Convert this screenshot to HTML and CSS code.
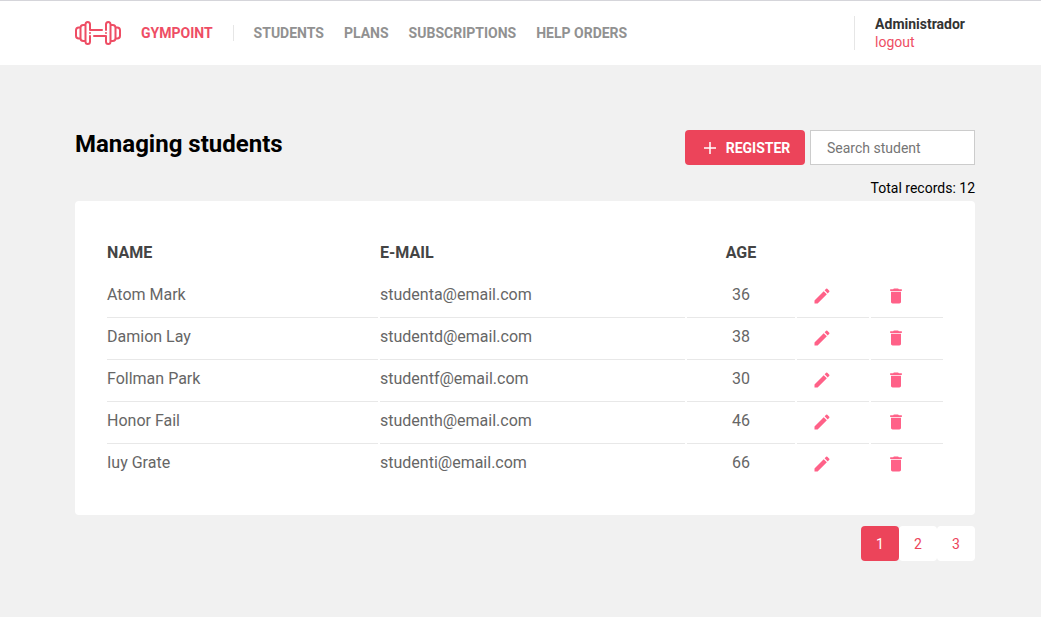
FILE: index.html
```
<!DOCTYPE html>
<html lang="en">
<head>
<meta charset="utf-8">
<title>Gympoint</title>
<link rel="stylesheet" href="styles.css">
</head>
<body>
<svg class="sprite" aria-hidden="true">
  <symbol id="pencil" viewBox="0 0 24 24"><path d="M3 17.25V21h3.75L17.81 9.94l-3.75-3.75L3 17.25zM20.71 7.04a1 1 0 0 0 0-1.41l-2.34-2.34a1 1 0 0 0-1.41 0l-1.83 1.83 3.75 3.75 1.83-1.83z"/></symbol>
  <symbol id="trash" viewBox="0 0 24 24"><path d="M6 19c0 1.100.9 2 2 2h8c1.100 0 2-.9 2-2V7H6v12zM19 4h-3.500l-1-1h-5l-1 1H5v2h14V4z"/></symbol>
</svg>
<header class="topbar">
  <a class="brand" href="#">
    <svg class="logo" viewBox="0 0 46 24" aria-hidden="true">
      <path d="M5 6.500H3.800Q1 6.500 1 9.300v5.400q0 2.800 2.800 2.800H5M10.500 4H8.300Q5.500 4 5.500 6.800v10.400q0 2.800 2.800 2.800h2.200M15 15v5.500a2.250 2.500 0 0 1-4.500 0V3.500a2.250 2.500 0 0 1 4.500 0V9H27M15 12v.1M41 6.500h1.200Q45 6.500 45 9.300v5.400q0 2.800-2.800 2.800H41M35.500 4h2.200q2.800 0 2.800 2.800v10.400q0 2.800-2.800 2.800h-2.200M31 9V3.500a2.250 2.500 0 0 1 4.500 0v17a2.250 2.500 0 0 1-4.500 0V15H19M31 12v.1"/>
    </svg>
    <span>GYMPOINT</span>
  </a>
  <nav class="menu">
    <a href="#">STUDENTS</a>
    <a href="#">PLANS</a>
    <a href="#">SUBSCRIPTIONS</a>
    <a href="#">HELP ORDERS</a>
  </nav>
  <div class="profile">
    <strong>Administrador</strong>
    <a href="#">logout</a>
  </div>
</header>
<main class="content">
  <div class="heading">
    <h1>Managing students</h1>
    <div class="actions">
      <button class="register" type="button">
        <svg viewBox="0 0 14 14" aria-hidden="true"><path d="M7 1v12M1 7h12"/></svg>
        <span>REGISTER</span>
      </button>
      <input class="search" type="text" placeholder="Search student" aria-label="Search student">
    </div>
  </div>
  <p class="total">Total records: 12</p>
  <section class="card">
    <table class="students">
      <colgroup><col class="col-name"><col class="col-mail"><col class="col-age"><col class="col-action"><col class="col-action"></colgroup>
      <thead>
        <tr><th>NAME</th><th>E-MAIL</th><th class="age">AGE</th><th></th><th></th></tr>
      </thead>
      <tbody>
        <tr><td>Atom Mark</td><td>studenta@email.com</td><td class="age">36</td><td class="action"><button type="button" aria-label="Edit"><svg><use href="#pencil"/></svg></button></td><td class="action"><button type="button" aria-label="Delete"><svg><use href="#trash"/></svg></button></td></tr>
        <tr><td>Damion Lay</td><td>studentd@email.com</td><td class="age">38</td><td class="action"><button type="button" aria-label="Edit"><svg><use href="#pencil"/></svg></button></td><td class="action"><button type="button" aria-label="Delete"><svg><use href="#trash"/></svg></button></td></tr>
        <tr><td>Follman Park</td><td>studentf@email.com</td><td class="age">30</td><td class="action"><button type="button" aria-label="Edit"><svg><use href="#pencil"/></svg></button></td><td class="action"><button type="button" aria-label="Delete"><svg><use href="#trash"/></svg></button></td></tr>
        <tr><td>Honor Fail</td><td>studenth@email.com</td><td class="age">46</td><td class="action"><button type="button" aria-label="Edit"><svg><use href="#pencil"/></svg></button></td><td class="action"><button type="button" aria-label="Delete"><svg><use href="#trash"/></svg></button></td></tr>
        <tr><td>Iuy Grate</td><td>studenti@email.com</td><td class="age">66</td><td class="action"><button type="button" aria-label="Edit"><svg><use href="#pencil"/></svg></button></td><td class="action"><button type="button" aria-label="Delete"><svg><use href="#trash"/></svg></button></td></tr>
      </tbody>
    </table>
  </section>
  <nav class="pages" aria-label="Pages">
    <button class="current" type="button">1</button>
    <button type="button">2</button>
    <button type="button">3</button>
  </nav>
</main>
</body>
</html>
```

FILE: styles.css
```
* {
  box-sizing: border-box;
  margin: 0;
  padding: 0;
}

body {
  min-height: 100vh;
  background: #f1f1f1;
  color: #000;
  font: 14px/18px Roboto, sans-serif;
}

button,
input {
  font: inherit;
}

button {
  border: 0;
  background: none;
  cursor: pointer;
}

a {
  text-decoration: none;
}

.sprite {
  position: absolute;
  width: 0;
  height: 0;
}

.topbar {
  display: flex;
  align-items: center;
  padding: 15px 76px 15px 75px;
  border-top: 1px solid #d5d5da;
  background: #fff;
}

.brand {
  display: flex;
  align-items: center;
  gap: 20px;
  height: 16px;
  padding-right: 20px;
  border-right: 1px solid #e6e6e6;
  color: #ee4d64;
  font-weight: 700;
}

.logo {
  width: 46px;
  height: 24px;
  fill: none;
  stroke: #ee4d64;
  stroke-width: 2;
  stroke-linecap: round;
  stroke-linejoin: round;
}

.menu {
  display: flex;
  gap: 20px;
  margin-left: 20px;
}

.menu a {
  color: #919191;
  font-weight: 700;
}

.profile {
  display: flex;
  flex-direction: column;
  height: 34px;
  justify-content: center;
  margin-left: auto;
  padding-left: 20px;
  border-left: 1px solid #e6e6e6;
}

.profile strong {
  color: #333;
}

.profile a {
  color: #ee4d64;
}

.content {
  padding: 65px 66px 56px 75px;
}

.heading {
  display: flex;
  justify-content: space-between;
}

h1 {
  font-size: 24px;
  line-height: 28px;
}

.actions {
  display: flex;
  gap: 5px;
}

.register {
  display: flex;
  align-items: center;
  justify-content: center;
  gap: 9px;
  width: 120px;
  height: 35px;
  padding-left: 3px;
  border-radius: 4px;
  background: #ec445a;
  color: #fff;
  font-weight: 700;
}

.register svg {
  width: 14px;
  height: 14px;
  fill: none;
  stroke: #fff;
  stroke-width: 1.500;
}

.search {
  width: 165px;
  height: 35px;
  padding: 0 16px;
  border: 1px solid #ccc;
  background: #fff;
}

.search::placeholder {
  color: #757575;
}

.total {
  padding: 14px 0 4px;
  text-align: right;
}

.card {
  padding: 30px;
  border-radius: 4px;
  background: #fff;
}

.students {
  width: 100%;
  table-layout: fixed;
  border-spacing: 2px;
  font-size: 16px;
  line-height: 20px;
}

.col-mail {
  width: 305px;
}

.col-age {
  width: 108px;
}

.col-action {
  width: 72px;
}

th {
  padding: 10px 0 13px;
  color: #444;
  text-align: left;
}

td {
  padding: 7px 0 12px;
  border-bottom: 1px solid #e8e8e8;
  color: #666;
  vertical-align: top;
}

tr:last-child td {
  padding-bottom: 10px;
  border-bottom: 0;
}

.age {
  text-align: center;
}

.students .action {
  padding-top: 8px;
  padding-right: 22px;
  padding-bottom: 11px;
  text-align: center;
}

.students tr:last-child .action {
  padding-bottom: 9px;
}

.action button {
  display: block;
  width: 20px;
  height: 20px;
  margin: 0 auto;
}

.action svg {
  display: block;
  width: 20px;
  height: 20px;
  fill: #ff6188;
}

.pages {
  display: flex;
  justify-content: flex-end;
  margin-top: 11px;
}

.pages button {
  width: 38px;
  height: 35px;
  border-radius: 4px;
  background: #fff;
  color: #ec445a;
}

.pages .current {
  background: #ec445a;
  color: #fff;
}
```
